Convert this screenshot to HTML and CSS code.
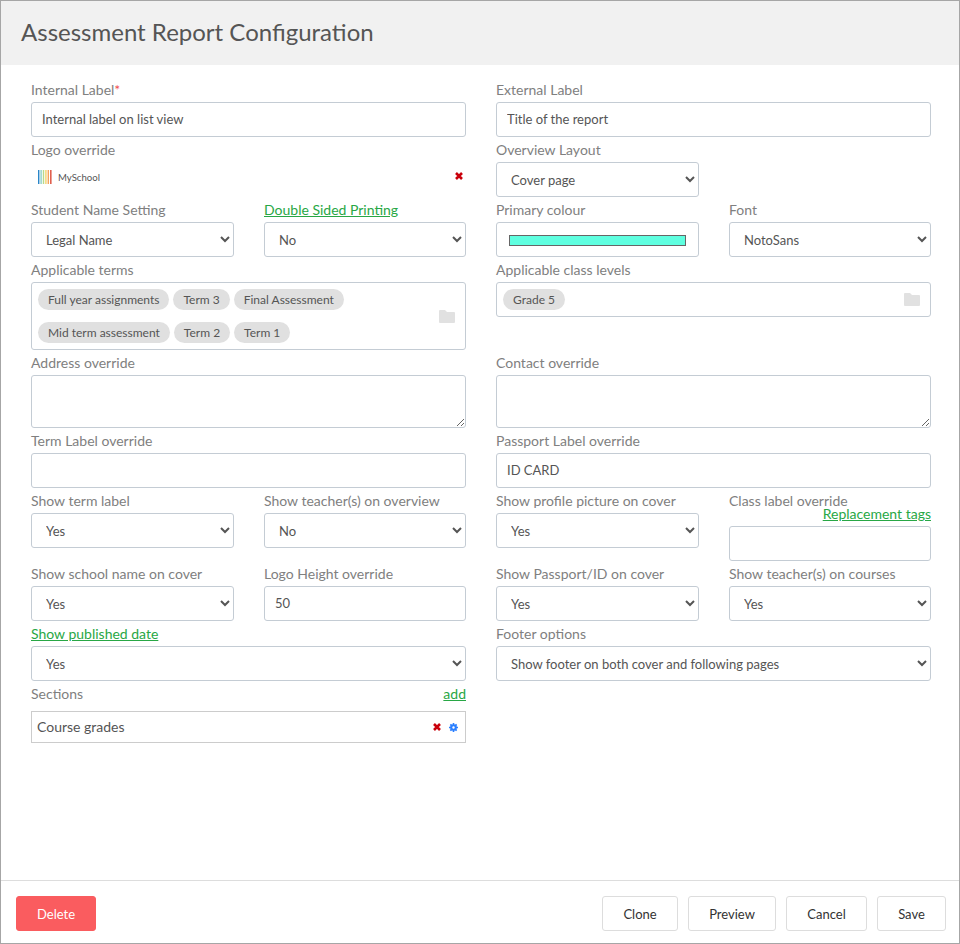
FILE: index.html
```html
<!DOCTYPE html>
<html lang="en">
<head>
<meta charset="utf-8">
<title>Assessment Report Configuration</title>
<link rel="stylesheet" href="styles.css">
</head>
<body>
<div class="dialog">
  <header class="head"><h1>Assessment Report Configuration</h1></header>
  <main class="form">
    <div class="field s2"><label class="label">Internal Label<span class="req">*</span></label><input class="ctl" value="Internal label on list view"></div>
    <div class="field s2"><label class="label">External Label</label><input class="ctl" value="Title of the report"></div>

    <div class="field s2"><label class="label">Logo override</label>
      <div class="logo">
        <span class="brand">
          <svg class="stripes" viewBox="0 0 14 14" width="14" height="14"><rect x="0" width="1.4" height="14" fill="#2a86c8"/><rect x="2.4" width="1.4" height="14" fill="#8fd0c8"/><rect x="4.8" width="1.4" height="14" fill="#b8d98a"/><rect x="7.2" width="1.4" height="14" fill="#f5d36b"/><rect x="9.6" width="1.4" height="14" fill="#f3a35e"/><rect x="12" width="1.6" height="14" fill="#e0604f"/></svg>
          <span class="brand-name">MySchool</span>
        </span>
        <svg class="ico-x" viewBox="0 0 8 8" width="8" height="8"><path d="M1 1L7 7M7 1L1 7" stroke="#c9000b" stroke-width="2.6"/></svg>
      </div>
    </div>
    <div class="field"><label class="label">Overview Layout</label><select class="ctl sel"><option>Cover page</option></select></div>
    <div></div>

    <div class="field"><label class="label">Student Name Setting</label><select class="ctl sel"><option>Legal Name</option></select></div>
    <div class="field"><a class="label link" href="#">Double Sided Printing</a><select class="ctl sel"><option>No</option></select></div>
    <div class="field"><label class="label">Primary colour</label><div class="ctl swatch-box"><div class="swatch"></div></div></div>
    <div class="field"><label class="label">Font</label><select class="ctl sel"><option>NotoSans</option></select></div>

    <div class="field s2"><label class="label">Applicable terms</label>
      <div class="ctl tagbox">
        <div class="tags">
          <div class="tag-line"><span class="tag">Full year assignments</span><span class="tag">Term 3</span><span class="tag">Final Assessment</span></div>
          <div class="tag-line"><span class="tag">Mid term assessment</span><span class="tag">Term 2</span><span class="tag">Term 1</span></div>
        </div>
        <svg class="folder" viewBox="0 0 16 13" width="16" height="13"><path d="M0 1a1 1 0 0 1 1-1h5l2 2h7a1 1 0 0 1 1 1v9a1 1 0 0 1-1 1H1a1 1 0 0 1-1-1z" fill="#e1e1e1"/></svg>
      </div>
    </div>
    <div class="field s2"><label class="label">Applicable class levels</label>
      <div class="ctl tagbox single">
        <div class="tags"><div class="tag-line"><span class="tag">Grade 5</span></div></div>
        <svg class="folder" viewBox="0 0 16 13" width="16" height="13"><path d="M0 1a1 1 0 0 1 1-1h5l2 2h7a1 1 0 0 1 1 1v9a1 1 0 0 1-1 1H1a1 1 0 0 1-1-1z" fill="#e1e1e1"/></svg>
      </div>
    </div>

    <div class="field s2"><label class="label">Address override</label><textarea class="ctl area"></textarea></div>
    <div class="field s2"><label class="label">Contact override</label><textarea class="ctl area"></textarea></div>

    <div class="field s2"><label class="label">Term Label override</label><input class="ctl" value=""></div>
    <div class="field s2"><label class="label">Passport Label override</label><input class="ctl" value="ID CARD"></div>

    <div class="field"><label class="label">Show term label</label><select class="ctl sel"><option>Yes</option></select></div>
    <div class="field"><label class="label">Show teacher(s) on overview</label><select class="ctl sel"><option>No</option></select></div>
    <div class="field"><label class="label">Show profile picture on cover</label><select class="ctl sel"><option>Yes</option></select></div>
    <div class="field"><label class="label tight">Class label override</label><a class="tags-link" href="#">Replacement tags</a><input class="ctl" value=""></div>

    <div class="field"><label class="label">Show school name on cover</label><select class="ctl sel"><option>Yes</option></select></div>
    <div class="field"><label class="label">Logo Height override</label><input class="ctl" value="50"></div>
    <div class="field"><label class="label">Show Passport/ID on cover</label><select class="ctl sel"><option>Yes</option></select></div>
    <div class="field"><label class="label">Show teacher(s) on courses</label><select class="ctl sel"><option>Yes</option></select></div>

    <div class="field s2"><a class="label link" href="#">Show published date</a><select class="ctl sel"><option>Yes</option></select></div>
    <div class="field s2"><label class="label">Footer options</label><select class="ctl sel"><option>Show footer on both cover and following pages</option></select></div>

    <div class="field s2">
      <div class="label section-head"><span>Sections</span><a class="link" href="#">add</a></div>
      <div class="section-row">
        <span class="section-name">Course grades</span>
        <span class="section-icons">
          <svg viewBox="0 0 8 8" width="8" height="8"><path d="M1 1L7 7M7 1L1 7" stroke="#c9000b" stroke-width="2.6"/></svg>
          <svg viewBox="0 0 10 10" width="9" height="9"><path d="M5 0v10M0 5h10M1.5 1.5l7 7M8.5 1.5l-7 7" stroke="#2a7fff" stroke-width="1.8"/><circle cx="5" cy="5" r="3.7" fill="#2a7fff"/><circle cx="5" cy="5" r="1.3" fill="#fff"/></svg>
        </span>
      </div>
    </div>
  </main>
  <footer class="foot">
    <button class="btn danger">Delete</button>
    <div class="actions">
      <button class="btn clone">Clone</button>
      <button class="btn preview">Preview</button>
      <button class="btn cancel">Cancel</button>
      <button class="btn save">Save</button>
    </div>
  </footer>
</div>
</body>
</html>
```
FILE: styles.css
```css
* { box-sizing: border-box; }
html, body { margin: 0; height: 100%; }
body { font-family: Lato, "Liberation Sans", sans-serif; font-size: 14px; color: #555; background: #fff; }
.dialog { height: 944px; width: 960px; border: 1px solid #a6a6a6; display: flex; flex-direction: column; overflow: hidden; }
.head { height: 64px; background: #f1f1f1; padding: 0 20px 4px; display: flex; align-items: center; flex: none; }
.head h1 { margin: 0; font-size: 24px; font-weight: 400; color: #555; }
.form { flex: 1; padding: 17px 0 0 30px; display: grid; grid-template-columns: 203px 202px 203px 202px; column-gap: 30px; grid-auto-rows: min-content; align-content: start; }
.field { padding-bottom: 5px; min-width: 0; display: flex; flex-direction: column; }
.s2 { grid-column: span 2; }
.label { display: block; height: 20px; line-height: 16px; color: #808080; font-size: 14px; }
.label.tight { height: 13px; }
.req { color: #f0504f; }
.link { color: #28a745; text-decoration: underline; }
.tags-link { display: block; height: 20px; line-height: 16px; text-align: right; color: #28a745; text-decoration: underline; }
.ctl { display: block; width: 100%; height: 35px; border: 1px solid #c4ccd4; border-radius: 3px; background: #fff; color: #555; font-family: inherit; font-size: 13px; padding: 5px 10px 6px; outline: none; }
.sel { padding: 6px 10px; }
.logo { height: 35px; display: flex; align-items: center; justify-content: space-between; padding: 0 3px 5px 7px; }
.brand { display: flex; align-items: center; gap: 6px; }
.brand-name { font-size: 9.6px; color: #555; }
.ico-x { display: block; margin-top: -3px; }
.swatch-box { padding: 12px 12px 0; }
.swatch { height: 11px; background: #5fffe0; border: 1px solid #666; }
.tagbox { height: auto; display: flex; align-items: center; justify-content: space-between; padding: 6px 10px 6px 6px; }
.tags { display: flex; flex-direction: column; gap: 12px; }
.tag-line { display: flex; gap: 4px; }
.tag { height: 21px; line-height: 21px; padding: 0 10px; border-radius: 11px; background: #e0e0e0; font-size: 12px; color: #555; white-space: nowrap; }
.folder { flex: none; }
.single { height: 35px; }
.area { height: 53px; resize: both; }
.section-head { height: 25px; display: flex; justify-content: space-between; }
.section-row { height: 32px; border: 1px solid #ccc; display: flex; align-items: center; justify-content: space-between; padding: 0 7px 0 5px; color: #555; }
.section-name { padding-bottom: 2px; }
.section-icons { display: flex; align-items: center; gap: 8px; }
.section-icons svg { display: block; }
.foot { height: 63px; flex: none; border-top: 1px solid #ddd; display: flex; align-items: flex-start; justify-content: space-between; padding: 15px 13px 0 15px; }
.actions { display: flex; gap: 10px; }
.btn { height: 35px; border: 1px solid #ddd; border-radius: 3px; background: #fff; color: #333; font-family: inherit; font-size: 13px; padding: 0; }
.danger { width: 80px; background: #fa5c5f; border-color: #fa5c5f; color: #fff; }
.clone { width: 76px; }
.preview { width: 88px; }
.cancel { width: 81px; }
.save { width: 69px; }
```
